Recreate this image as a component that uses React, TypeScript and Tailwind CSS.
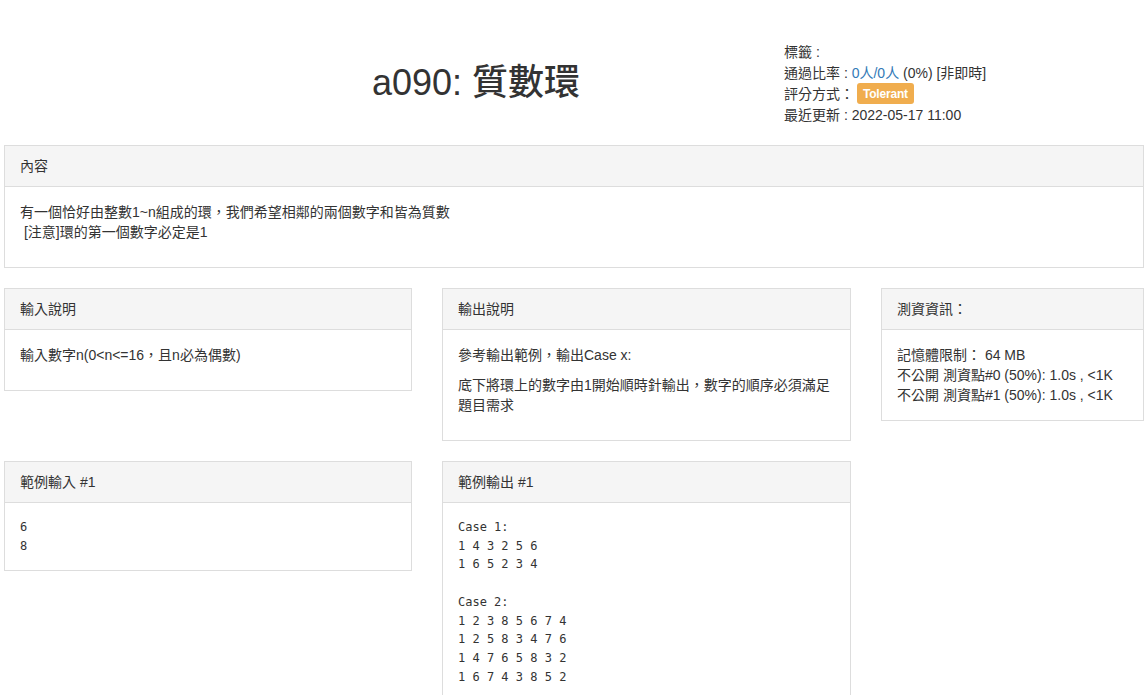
import React from "react";

const sans = { fontFamily: '"Liberation Sans", Arial, "Noto Sans CJK TC", sans-serif' };

function Panel({ title, width, children }: { title: string; width: string; children: React.ReactNode }) {
  return (
    <div className={`border border-[#dddddd] bg-white ${width}`}>
      <div className="bg-[#f5f5f5] border-b border-[#dddddd] px-[15px] py-[10px] leading-[20px]">{title}</div>
      <div className="p-[15px]">{children}</div>
    </div>
  );
}

const mono = "font-['DejaVu_Sans_Mono',monospace] text-[12px] leading-[18.7px] whitespace-pre";

export default function App() {
  return (
    <div
      className="min-h-[695px] bg-white text-[#333333] text-[14px] leading-[20px] w-[1146px] pl-[4px] pr-[2px] pb-[20px]"
      style={sans}
    >
      <div className="flex items-center pt-[41px] pb-[1px]">
        <div className="ml-[164px] w-[616px] text-center text-[36px] leading-[40px] font-medium text-[#333333]">
          a090: 質數環
        </div>
        <div className="flex flex-col">
          <div className="h-[21px] flex items-center">標籤 :</div>
          <div className="h-[21px] flex items-center">
            通過比率 :&nbsp;<span className="text-[#337ab7]">0人/0人</span>&nbsp;(0%) [非即時]
          </div>
          <div className="h-[21px] flex items-center">
            評分方式：
            <span className="ml-[3px] inline-flex items-center h-[21px] px-[6px] rounded-[3px] bg-[#f0ad4e] text-white text-[12px] font-bold tracking-[-0.2px]">
              Tolerant
            </span>
          </div>
          <div className="h-[21px] flex items-center">最近更新 : 2022-05-17 11:00</div>
        </div>
      </div>

      <div className="mt-[19px]">
        <Panel title="內容" width="w-[1140px]">
          <p className="mb-[10px]">
            有一個恰好由整數1~n組成的環，我們希望相鄰的兩個數字和皆為質數
            <br />
            &nbsp;[注意]環的第一個數字必定是1
          </p>
        </Panel>
      </div>

      <div className="mt-[20px] flex items-start gap-[30px]">
        <Panel title="輸入說明" width="w-[408px]">
          <p className="mb-[10px]">輸入數字n(0&lt;n&lt;=16，且n必為偶數)</p>
        </Panel>
        <Panel title="輸出說明" width="w-[409px]">
          <p className="mb-[10px]">參考輸出範例，輸出Case x:</p>
          <p className="mb-[10px]">底下將環上的數字由1開始順時針輸出，數字的順序必須滿足題目需求</p>
        </Panel>
        <Panel title="測資資訊：" width="w-[263px]">
          <div>記憶體限制： 64 MB</div>
          <div>不公開 測資點#0 (50%): 1.0s , &lt;1K</div>
          <div>不公開 測資點#1 (50%): 1.0s , &lt;1K</div>
        </Panel>
      </div>

      <div className="mt-[20px] flex items-start gap-[30px]">
        <Panel title="範例輸入 #1" width="w-[408px]">
          <div className={mono}>{"6\n8"}</div>
        </Panel>
        <Panel title="範例輸出 #1" width="w-[409px]">
          <div className={mono}>
            {"Case 1:\n1 4 3 2 5 6\n1 6 5 2 3 4\n\nCase 2:\n1 2 3 8 5 6 7 4\n1 2 5 8 3 4 7 6\n1 4 7 6 5 8 3 2\n1 6 7 4 3 8 5 2"}
          </div>
        </Panel>
      </div>
    </div>
  );
}
